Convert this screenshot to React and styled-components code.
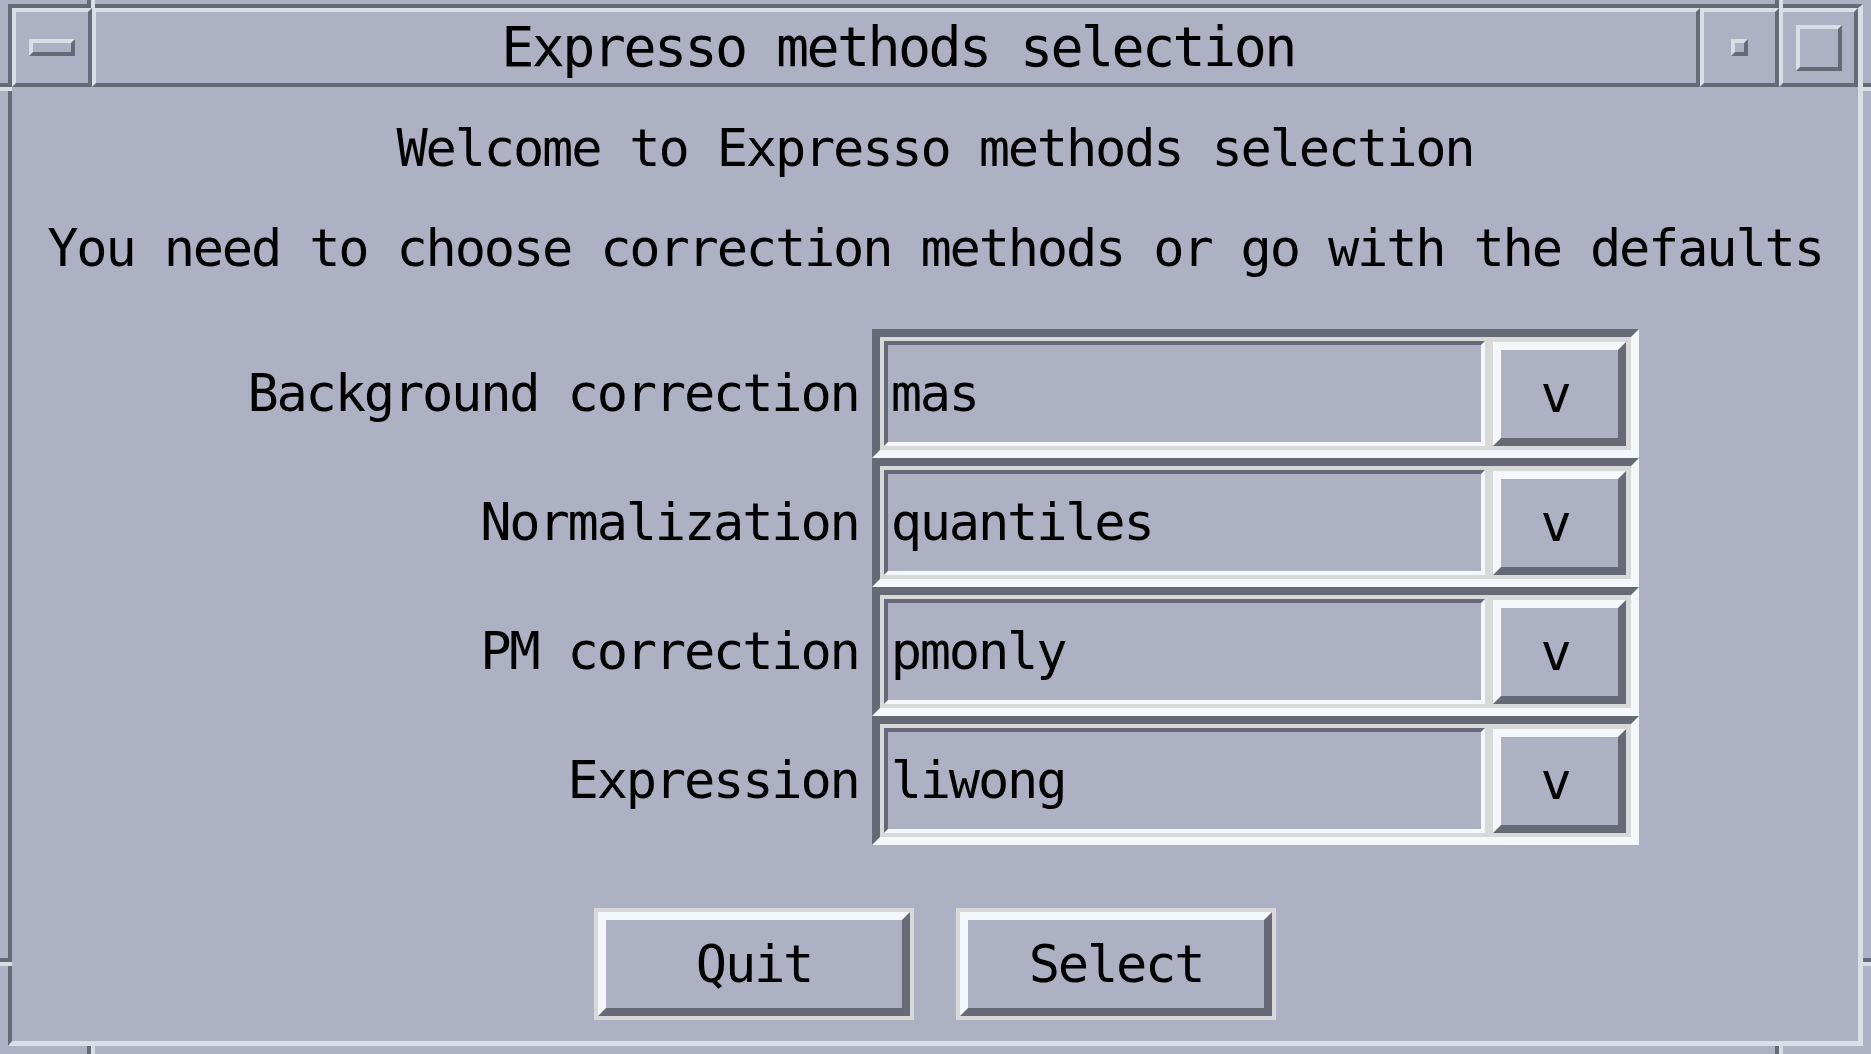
import React from 'react';
import styled, {createGlobalStyle} from "styled-components";

const colors = {
    bg: "#aeb1c3",
    dark: "#676a76",
    frameLight: "#dcdee6",
    white: "#f4f8fc",
    ring: "#d9d9d9",
};
const mono = `"DejaVu Sans Mono", "Liberation Mono", monospace`;

const Global = createGlobalStyle`
html, body{
margin: 0;
padding: 0;
background: ${colors.bg};
}
#root{
width: 1871px;
height: 1054px;
overflow: hidden;
position: relative;
}
`;

const Screen = styled.div`
width: 1871px;
height: 1054px;
padding: 4px 8px 0;
box-sizing: border-box;
background: ${colors.bg};
font-family: ${mono};
color: #000;
`;
const Tick = styled.span`
position: absolute;
display: block;
width: ${props => props.vertical ? "4px" : "12px"};
height: ${props => props.vertical ? "8px" : "4px"};
background: ${props => props.light ? colors.frameLight : colors.dark};
`;
const Window = styled.div`
width: 1855px;
height: 1042px;
box-sizing: border-box;
border-style: solid;
border-width: 4px 5px 5px 4px;
border-color: ${colors.dark} ${colors.frameLight} ${colors.frameLight} ${colors.dark};
display: flex;
flex-flow: column;
`;
const TitleBar = styled.div`
height: 79px;
display: flex;
flex-flow: row nowrap;
`;
const TitleCell = styled.div`
box-sizing: border-box;
width: ${props => props.width ? props.width + "px" : "auto"};
flex: ${props => props.grow ? "1" : "none"};
border: 4px solid;
border-color: ${colors.frameLight} ${colors.dark} ${colors.dark} ${colors.frameLight};
display: flex;
justify-content: center;
align-items: center;
`;
const Bevel = styled.span`
display: block;
box-sizing: border-box;
width: ${props => props.w}px;
height: ${props => props.h}px;
border: 4px solid;
border-color: ${colors.frameLight} ${colors.dark} ${colors.dark} ${colors.frameLight};
`;
const TitleText = styled.span`
font-size: 55px;
letter-spacing: -2.6px;
line-height: 71px;
white-space: pre;
margin-left: 4px;
`;
const Body = styled.div`
flex: 1;
display: flex;
flex-flow: column;
align-items: center;
padding-top: 31px;
`;
const Message = styled.p`
margin: 0 0 ${props => props.gap}px;
font-size: 52px;
letter-spacing: -2.2px;
line-height: 60px;
white-space: pre;
`;
const Form = styled.div`
display: grid;
grid-template-columns: auto 767px;
column-gap: 13px;
margin-left: 16px;
`;
const Label = styled.span`
font-size: 52px;
letter-spacing: -2.2px;
line-height: 129px;
text-align: right;
white-space: pre;
`;
const Field = styled.div`
height: 129px;
box-sizing: border-box;
display: flex;
border: 8px solid;
border-color: ${colors.dark} ${colors.white} ${colors.white} ${colors.dark};
background: ${colors.ring};
`;
const Entry = styled.div`
flex: 1;
margin: 4px;
border: 4px solid;
border-color: ${colors.dark} ${colors.white} ${colors.white} ${colors.dark};
background: ${colors.bg};
padding-left: 3px;
font-size: 52px;
letter-spacing: -2.2px;
line-height: 97px;
white-space: pre;
`;
const DropButton = styled.div`
width: 133px;
box-sizing: border-box;
margin: 5px 5px 4px 4px;
padding-right: 6px;
border: 8px solid;
border-color: ${colors.white} ${colors.dark} ${colors.dark} ${colors.white};
background: ${colors.bg};
display: flex;
justify-content: center;
align-items: center;
font-size: 52px;
line-height: 88px;
`;
const Actions = styled.div`
display: flex;
gap: 50px;
margin-top: 67px;
`;
const Button = styled.div`
width: 312px;
height: 104px;
box-sizing: border-box;
border: 8px solid;
border-color: ${colors.white} ${colors.dark} ${colors.dark} ${colors.white};
box-shadow: 0 0 0 4px ${colors.ring};
display: flex;
justify-content: center;
align-items: center;
font-size: 52px;
letter-spacing: -2.2px;
line-height: 88px;
`;

const methods = [
    {label: "Background correction", value: "mas"},
    {label: "Normalization", value: "quantiles"},
    {label: "PM correction", value: "pmonly"},
    {label: "Expression", value: "liwong"},
];

// resize-corner separators of the window manager frame
const ticks = [
    {x: 87, y: 0, v: true}, {x: 91, y: 0, v: true, l: true},
    {x: 1775, y: 0, v: true}, {x: 1779, y: 0, v: true, l: true},
    {x: 87, y: 1046, v: true}, {x: 91, y: 1046, v: true, l: true},
    {x: 1775, y: 1046, v: true}, {x: 1779, y: 1046, v: true, l: true},
    {x: 0, y: 83}, {x: 0, y: 87, l: true},
    {x: 1863, y: 83}, {x: 1863, y: 87, l: true},
    {x: 0, y: 958}, {x: 0, y: 962, l: true},
    {x: 1863, y: 958}, {x: 1863, y: 962, l: true},
];

const App = () => {
    return (
        <Screen>
            <Global/>
            {ticks.map((t, i) => (
                <Tick key={i} vertical={t.v} light={t.l} style={{left: t.x, top: t.y}}/>
            ))}
            <Window>
                <TitleBar>
                    <TitleCell width={80}><Bevel w={46} h={17}/></TitleCell>
                    <TitleCell grow><TitleText>Expresso methods selection</TitleText></TitleCell>
                    <TitleCell width={79}><Bevel w={17} h={17}/></TitleCell>
                    <TitleCell width={79}><Bevel w={46} h={46}/></TitleCell>
                </TitleBar>
                <Body>
                    <Message gap={40}>Welcome to Expresso methods selection</Message>
                    <Message gap={51}>You need to choose correction methods or go with the defaults</Message>
                    <Form>
                        {methods.map(m => (
                            <React.Fragment key={m.label}>
                                <Label>{m.label}</Label>
                                <Field>
                                    <Entry>{m.value}</Entry>
                                    <DropButton>v</DropButton>
                                </Field>
                            </React.Fragment>
                        ))}
                    </Form>
                    <Actions>
                        <Button>Quit</Button>
                        <Button>Select</Button>
                    </Actions>
                </Body>
            </Window>
        </Screen>
    )
};

export default App
